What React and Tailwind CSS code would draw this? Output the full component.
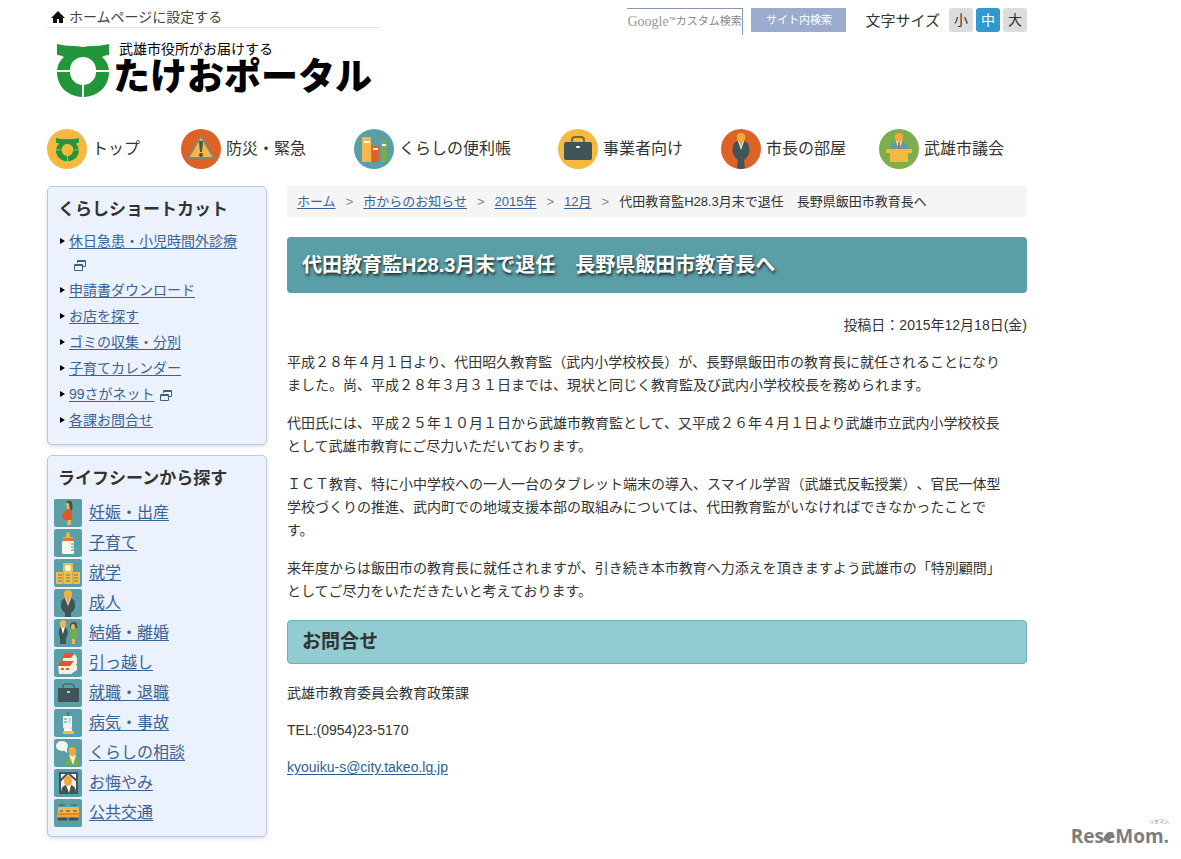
import React from "react";

const NAVY = "#3f5559";

function MarkShape() {
  return (
    <>
      <path d="M0 0 Q8 2 15 2 Q21 2 26 3 Q31 2 37 2 Q44 2 52 0 V11 Q48 11 45 13 Q51 18 52 26 H39 A13 13 0 0 0 13 26 H0 Q1 18 7 13 Q4 11 0 11 Z" />
      <path d="M0 28 H13 A13 13 0 0 0 25 41 V53 C10 52 0 42 0 28 Z" />
      <path d="M52 28 H39 A13 13 0 0 1 27 41 V53 C42 52 52 42 52 28 Z" />
    </>
  );
}

function Circle({ color, children }) {
  return (
    <svg viewBox="0 0 40 40" className="w-10 h-10 shrink-0" aria-hidden="true">
      <circle cx="20" cy="20" r="20" fill={color} />
      {children}
    </svg>
  );
}

function Tile({ children }) {
  return (
    <svg viewBox="0 0 28 28" className="w-7 h-7 shrink-0" aria-hidden="true">
      <rect width="28" height="28" rx="2" fill="#5a9ea7" />
      {children}
    </svg>
  );
}

const navItems = [
  {
    label: "トップ",
    pad: "pr-[41px]",
    icon: (
      <Circle color="#f5b93f">
        <g transform="translate(9 9) scale(0.44)" fill="#23953a">
          <MarkShape />
        </g>
      </Circle>
    ),
  },
  {
    label: "防災・緊急",
    pad: "pr-12",
    icon: (
      <Circle color="#dd6225">
        <path d="M20 7 L33 29 H7 Z" fill="#f5b64a" stroke="#8c8467" strokeWidth="2" strokeLinejoin="round" />
        <path d="M18 12 H22 L21 23 H19 Z" fill={NAVY} />
        <circle cx="20" cy="26" r="2" fill={NAVY} />
      </Circle>
    ),
  },
  {
    label: "くらしの便利帳",
    pad: "pr-[47px]",
    icon: (
      <Circle color="#5a9ea7">
        <rect x="8" y="8" width="9" height="25" fill="#f5b64a" />
        <rect x="10" y="12" width="6" height="2" fill="#fff" />
        <rect x="18" y="17" width="7" height="16" fill="#dd6225" />
        <rect x="19" y="19" width="5" height="2" fill="#fff" />
        <rect x="27" y="12" width="6" height="21" fill="#76ad4b" />
        <rect x="28" y="15" width="4" height="2" fill="#fff" />
      </Circle>
    ),
  },
  {
    label: "事業者向け",
    pad: "pr-[38px]",
    icon: (
      <Circle color="#f5b93f">
        <path d="M14 13 V11 Q14 8 17 8 H23 Q26 8 26 11 V13" fill="none" stroke="#7d6a35" strokeWidth="2" />
        <rect x="6" y="13" width="28" height="18" rx="2" fill={NAVY} />
        <rect x="18" y="17" width="4" height="2" rx="1" fill="#fff" />
      </Circle>
    ),
  },
  {
    label: "市長の部屋",
    pad: "pr-[33px]",
    icon: (
      <Circle color="#dd6225">
        <path d="M17 12 L13 14 Q10 22 13 27 L17 31 L16 39 Q20 41 24 39 L23 31 L27 27 Q30 22 27 14 L23 12 Z" fill={NAVY} />
        <path d="M17 12 H23 L20 21 Z" fill="#fff" />
        <path d="M19 13 H21 L20 19 Z" fill="#dd6225" />
        <path d="M20 4 C15 4 15 9 17 12 Q20 15 23 12 C25 9 25 4 20 4 Z" fill="#f5a93a" />
      </Circle>
    ),
  },
  {
    label: "武雄市議会",
    pad: "",
    icon: (
      <Circle color="#7dad4c">
        <path d="M11 21 Q11 13 17 12 H23 Q29 13 29 21 Z" fill="#5a9ea7" />
        <path d="M17 12 H23 L20 21 Z" fill="#fff" />
        <path d="M19 13 H21 L21 20 H19 Z" fill="#dd6225" />
        <path d="M20 4 C15 4 15 9 17 12 Q20 14 23 12 C25 9 25 4 20 4 Z" fill="#f5a93a" />
        <path d="M7 20 H33 V24 H29 V33 H11 V24 H7 Z" fill="#f5b93f" />
      </Circle>
    ),
  },
];

const shortcuts = [
  { label: "休日急患・小児時間外診療", external: true },
  { label: "申請書ダウンロード" },
  { label: "お店を探す" },
  { label: "ゴミの収集・分別" },
  { label: "子育てカレンダー" },
  { label: "99さがネット", external: true },
  { label: "各課お問合せ" },
];

const lifeScenes = [
  {
    label: "妊娠・出産",
    icon: (
      <Tile>
        <path d="M12 3 Q15 0 18 3 Q19 8 18 12 H14 Z" fill={NAVY} />
        <path d="M12 4 Q14 3 15 5 L16 11 H13 V8 Q12 7 12 4 Z" fill="#f5b64a" />
        <path d="M13 10 H17 Q19 15 17 21 H12 Q7 20 8 15 Q11 14 13 10 Z" fill="#dd5a28" />
        <path d="M14 21 H17 V26 H13 Z" fill="#f5b64a" />
      </Tile>
    ),
  },
  {
    label: "子育て",
    icon: (
      <Tile>
        <path d="M12 8 Q12 3 14 3 Q16 3 16 8 H19 V11 H9 V8 Z" fill="#f5b03f" />
        <rect x="9" y="9" width="10" height="3" fill="#dd7a28" />
        <rect x="8" y="12" width="12" height="13" rx="1" fill="#f4f6ec" />
        <path d="M17 15 H20 M17 18 H20 M17 21 H20" stroke="#5a8b91" />
      </Tile>
    ),
  },
  {
    label: "就学",
    icon: (
      <Tile>
        <path d="M2 13 H9 V4 H19 V13 H26 V25 H2 Z" fill="#f0bd4a" />
        <circle cx="14" cy="9" r="3" fill="#fff" />
        <path d="M4 16 H8 M4 19 H8 M4 22 H8 M12 16 H16 M12 19 H16 M12 22 H16 M20 16 H24 M20 19 H24 M20 22 H24" stroke="#567f78" />
        <path d="M9 13 V25 M19 13 V25" stroke="#c99a35" />
      </Tile>
    ),
  },
  {
    label: "成人",
    icon: (
      <Tile>
        <path d="M11 9 L8 11 Q6 17 8 21 L11 24 V28 H17 V24 L20 21 Q22 17 20 11 L17 9 Z" fill={NAVY} />
        <path d="M11 9 H17 L14 17 Z" fill="#fff" />
        <path d="M13 10 H15 L14 16 Z" fill="#dd6225" />
        <path d="M14 1 C9 1 9 6 11 9 Q14 12 17 9 C19 6 19 1 14 1 Z" fill="#f5b03f" />
      </Tile>
    ),
  },
  {
    label: "結婚・離婚",
    icon: (
      <Tile>
        <path d="M7 8 L5 10 Q4 15 6 19 V25 H12 V19 Q15 15 13 10 L11 8 Z" fill={NAVY} />
        <path d="M7 8 H11 L9 15 Z" fill="#fff" />
        <ellipse cx="9" cy="5" rx="3" ry="4" fill="#f5b64a" />
        <path d="M16 9 Q15 3 20 3 Q24 3 23 9 Z" fill={NAVY} />
        <ellipse cx="19" cy="8" rx="2" ry="3" fill="#f5b64a" />
        <path d="M17 10 H22 Q25 15 22 20 H17 Q14 15 17 10 Z" fill="#76ad4b" />
        <rect x="18" y="20" width="3" height="5" fill="#f5b64a" />
      </Tile>
    ),
  },
  {
    label: "引っ越し",
    icon: (
      <Tile>
        <path d="M9 8 L12 4 H20 L23 9 V15 H9 Z" fill="#f4f1e4" />
        <path d="M7 9 L11 4 H21 L17 9 Z" fill="#dd5a28" />
        <path d="M4 15 H16 L20 12 L23 17 V21 L17 25 H5 Z" fill="#f4f1e4" />
        <path d="M3 17 L7 12 H20 L16 17 Z" fill="#dd5a28" />
        <path d="M7 20 H10 M12 20 H15" stroke="#dd6225" strokeWidth="2" />
      </Tile>
    ),
  },
  {
    label: "就職・退職",
    icon: (
      <Tile>
        <path d="M9 9 V7 Q9 5 12 5 H17 Q20 5 20 7 V9" fill="none" stroke={NAVY} strokeWidth="1" />
        <rect x="4" y="9" width="21" height="14" rx="1" fill={NAVY} />
        <rect x="13" y="12" width="3" height="2" rx="1" fill="#e9e2b8" />
      </Tile>
    ),
  },
  {
    label: "病気・事故",
    icon: (
      <Tile>
        <path d="M14 3 V8" stroke={NAVY} strokeWidth="1" />
        <path d="M9 7 H18 V18 L17 21 H11 L9 18 Z" fill="#eef3ef" />
        <path d="M10 10 H13 M10 13 H13" stroke="#5a8b91" />
        <rect x="14" y="9" width="3" height="5" fill="#c9dbd9" />
        <path d="M10 20 H18 V22 H10 Z" fill="#fff" />
        <path d="M9 22 H20 V25 H9 Z" fill="#f0bd4a" />
      </Tile>
    ),
  },
  {
    label: "くらしの相談",
    icon: (
      <Tile>
        <ellipse cx="8" cy="7" rx="6" ry="5" fill="#f4f6ec" />
        <path d="M8 10 L13 14 L13 7 Z" fill="#f4f6ec" />
        <path d="M12 26 Q12 18 17 17 H20 Q25 18 25 26 Z" fill="#76ad4b" />
        <path d="M15 16 H22 L19 26 Z" fill="#f4f1e4" />
        <path d="M18 8 C14 8 14 13 16 16 Q18 19 21 16 C23 13 23 8 18 8 Z" fill="#f5a93a" />
      </Tile>
    ),
  },
  {
    label: "お悔やみ",
    icon: (
      <Tile>
        <rect x="6" y="4" width="17" height="20" fill="#f4f1e4" stroke={NAVY} strokeWidth="2" />
        <path d="M7 24 Q7 17 12 16 H17 Q22 17 22 24 Z" fill={NAVY} />
        <path d="M12 16 H17 L15 24 Z" fill="#fff" />
        <ellipse cx="14" cy="12" rx="4" ry="5" fill="#f5a93a" />
        <path d="M6 12 L14 4 L23 12" fill="none" stroke={NAVY} strokeWidth="2" />
      </Tile>
    ),
  },
  {
    label: "公共交通",
    icon: (
      <Tile>
        <path d="M5 6 H11 M17 6 H23" stroke={NAVY} />
        <rect x="4" y="8" width="21" height="7" rx="1" fill="#f5b93f" />
        <rect x="3" y="14" width="22" height="5" fill="#e8842b" />
        <path d="M6 12 H9 M12 12 H16 M19 12 H23" stroke="#6f8a80" strokeWidth="2" />
        <path d="M3 17 H25" stroke="#f5c95f" />
        <path d="M5 20 H12 M16 20 H23" stroke={NAVY} strokeWidth="3" strokeLinecap="round" />
      </Tile>
    ),
  },
];

const crumbs = ["ホーム", "市からのお知らせ", "2015年", "12月"];

const paragraphs = [
  [
    "平成２８年４月１日より、代田昭久教育監（武内小学校校長）が、長野県飯田市の教育長に就任されることになり",
    "ました。尚、平成２８年３月３１日までは、現状と同じく教育監及び武内小学校校長を務められます。",
  ],
  [
    "代田氏には、平成２５年１０月１日から武雄市教育監として、又平成２６年４月１日より武雄市立武内小学校校長",
    "として武雄市教育にご尽力いただいております。",
  ],
  [
    "ＩＣＴ教育、特に小中学校への一人一台のタブレット端末の導入、スマイル学習（武雄式反転授業）、官民一体型",
    "学校づくりの推進、武内町での地域支援本部の取組みについては、代田教育監がいなければできなかったことで",
    "す。",
  ],
  [
    "来年度からは飯田市の教育長に就任されますが、引き続き本市教育へ力添えを頂きますよう武雄市の「特別顧問」",
    "としてご尽力をいただきたいと考えております。",
  ],
];

function WindowIcon({ className }) {
  return (
    <svg viewBox="0 0 12 11" className={className} fill="none" stroke="#3c5f84" aria-label="別ウィンドウ">
      <path d="M3.5 3 V0.5 H11.5 V6.5 H9 M3 1.5 H12" />
      <path d="M0.5 4.5 H8.5 V10.5 H0.5 Z M0 5.5 H9" />
    </svg>
  );
}

function Header() {
  return (
    <header className="flex justify-between items-start">
      <div className="w-[332px]">
        <a href="#" className="flex items-center gap-1 h-7 pt-2 pb-px pl-1 border-b border-[#e4e4e4] text-[#444]">
          <svg viewBox="0 0 14 12" className="w-3.5 h-3" aria-hidden="true">
            <path d="M7 0 L14 7 H12 V12 H8 V8 H6 V12 H2 V7 H0 Z" fill="#111" />
          </svg>
          ホームページに設定する
        </a>
        <a href="#" className="flex items-start gap-1 pl-2.5 pt-[13px] text-black">
          <svg viewBox="0 0 52 53" className="w-[52px] h-[53px] mt-[3px] shrink-0" fill="#23953a" aria-hidden="true">
            <MarkShape />
          </svg>
          <span className="flex flex-col whitespace-nowrap">
            <span className="pl-1.5 leading-4">武雄市役所がお届けする</span>
            <span className="text-[37px] leading-[42px] font-black">たけおポータル</span>
          </span>
        </a>
      </div>
      <div className="flex items-start pt-2">
        <form className="flex items-start gap-2" onSubmit={(e) => e.preventDefault()}>
          <div className="relative">
            <input
              id="site-search"
              type="text"
              className="block w-[116px] h-[27px] border-t border-r border-[#8398b5] bg-transparent outline-none"
            />
            <label
              htmlFor="site-search"
              className="absolute inset-0 flex items-center text-[11px] text-[#888] whitespace-nowrap"
            >
              <span className="font-['Liberation_Serif',serif] text-sm text-[#999]">Google</span>
              <span className="text-[7px] self-start">™</span>
              カスタム検索
            </label>
          </div>
          <button type="submit" className="w-[95px] h-6 bg-[#9dacce] text-white text-[11px] leading-6">
            サイト内検索
          </button>
        </form>
        <div className="flex items-center gap-[3px] pl-[19px]">
          <span className="pr-1.5 text-[15px] text-[#333]">文字サイズ</span>
          <button type="button" className="w-6 h-6 rounded-[3px] bg-[#dcdcdc] text-[#333]">小</button>
          <button type="button" className="w-6 h-6 rounded-[3px] bg-[#3399cc] text-white">中</button>
          <button type="button" className="w-6 h-6 rounded-[3px] bg-[#dcdcdc] text-[#333]">大</button>
        </div>
      </div>
    </header>
  );
}

function Sidebar() {
  const box = "rounded-[5px] border border-[#bcc7e0] bg-[#ebf1fd] shadow-[0_2px_4px_rgba(0,0,0,0.12)]";
  return (
    <aside className="w-[220px] shrink-0 flex flex-col gap-2.5">
      <section className={`${box} pl-2.5 pr-5 pt-[11px] pb-3`}>
        <h2 className="text-[17px] leading-6 font-bold">くらしショートカット</h2>
        <ul className="mt-2 flex flex-col gap-[3px]">
          {shortcuts.map((item) => (
            <li key={item.label} className="flex items-start">
              <svg viewBox="0 0 5 6" className="w-[5px] h-1.5 mt-2 ml-0.5 mr-1 shrink-0" aria-hidden="true">
                <path d="M0 0 L5 3 L0 6 Z" fill="#000" />
              </svg>
              <span>
                <a href="#" className="text-[#3c6395] underline underline-offset-2">{item.label}</a>
                {item.external && <WindowIcon className="inline-block w-3 h-[11px] ml-[5px]" />}
              </span>
            </li>
          ))}
        </ul>
      </section>
      <section className={`${box} px-1.5 pt-[11px] pb-[9px]`}>
        <h2 className="pl-1 text-[17px] leading-6 font-bold">ライフシーンから探す</h2>
        <ul className="mt-2 flex flex-col gap-0.5">
          {lifeScenes.map((item) => (
            <li key={item.label}>
              <a href="#" className="flex items-center gap-[7px] text-base leading-7 text-[#3c6395] underline underline-offset-2">
                {item.icon}
                {item.label}
              </a>
            </li>
          ))}
        </ul>
      </section>
    </aside>
  );
}

function Article() {
  return (
    <main className="flex-1 min-w-0">
      <nav className="flex items-center h-[31px] px-2.5 bg-[#f5f5f5] text-[13px]">
        {crumbs.map((crumb) => (
          <React.Fragment key={crumb}>
            <a href="#" className="text-[#3c6395] underline underline-offset-2">{crumb}</a>
            <span className="px-2.5 text-[#888]">&gt;</span>
          </React.Fragment>
        ))}
        <span>代田教育監H28.3月末で退任　長野県飯田市教育長へ</span>
      </nav>
      <h1 className="mt-5 px-[15px] rounded-[4px] bg-[#5a9ea7] text-white text-xl leading-[56px] font-bold [text-shadow:1px_2px_3px_rgba(0,0,0,0.8)]">
        代田教育監H28.3月末で退任　長野県飯田市教育長へ
      </h1>
      <p className="mt-[21px] text-right">投稿日：2015年12月18日(金)</p>
      <div className="mt-3.5 flex flex-col gap-[15px] [text-spacing-trim:space-all]">
        {paragraphs.map((lines) => (
          <p key={lines[0]}>
            {lines.map((line, i) => (
              <React.Fragment key={line}>
                {i > 0 && <br />}
                {line}
              </React.Fragment>
            ))}
          </p>
        ))}
      </div>
      <h2 className="mt-[17px] px-3.5 rounded-[4px] border border-[#6fb0b4] bg-[#92cbd1] text-[19px] leading-[42px] font-bold">
        お問合せ
      </h2>
      <div className="mt-[18px] flex flex-col gap-3.5">
        <p>武雄市教育委員会教育政策課</p>
        <p>TEL:(0954)23-5170</p>
        <p>
          <a href="#" className="text-[#2a5f95] underline underline-offset-2">kyouiku-s@city.takeo.lg.jp</a>
        </p>
      </div>
    </main>
  );
}

export default function App() {
  return (
    <div className="flex bg-white text-[#333] text-sm leading-[23px] font-['Liberation_Sans','Noto_Sans_CJK_JP',sans-serif]">
      <div className="flex-1 max-w-[1027px] pl-[47px] pb-[22px]">
        <Header />
        <nav className="flex mt-[30px] mb-[17px]">
          {navItems.map((item) => (
            <a key={item.label} href="#" className={`flex items-center gap-[5px] text-base whitespace-nowrap ${item.pad}`}>
              {item.icon}
              {item.label}
            </a>
          ))}
        </nav>
        <div className="flex items-start gap-5">
          <Sidebar />
          <Article />
        </div>
      </div>
      <div className="self-end ml-auto pr-3 pb-[11px] flex flex-col text-[#7d7d7d] font-['Open_Sans',sans-serif]">
        <span className="self-end text-[5px] leading-[7px] font-['Noto_Sans_CJK_JP',sans-serif]">リセマム</span>
        <div className="relative">
          <p className="text-[19px] leading-6 font-bold">ReseMom.</p>
          <svg viewBox="0 0 12 12" className="absolute left-8 top-2 w-2.5 h-2.5" aria-hidden="true">
            <path d="M0 10 Q0 2 12 0 Q12 10 4 11 Z" fill="#7d7d7d" />
          </svg>
        </div>
      </div>
    </div>
  );
}
